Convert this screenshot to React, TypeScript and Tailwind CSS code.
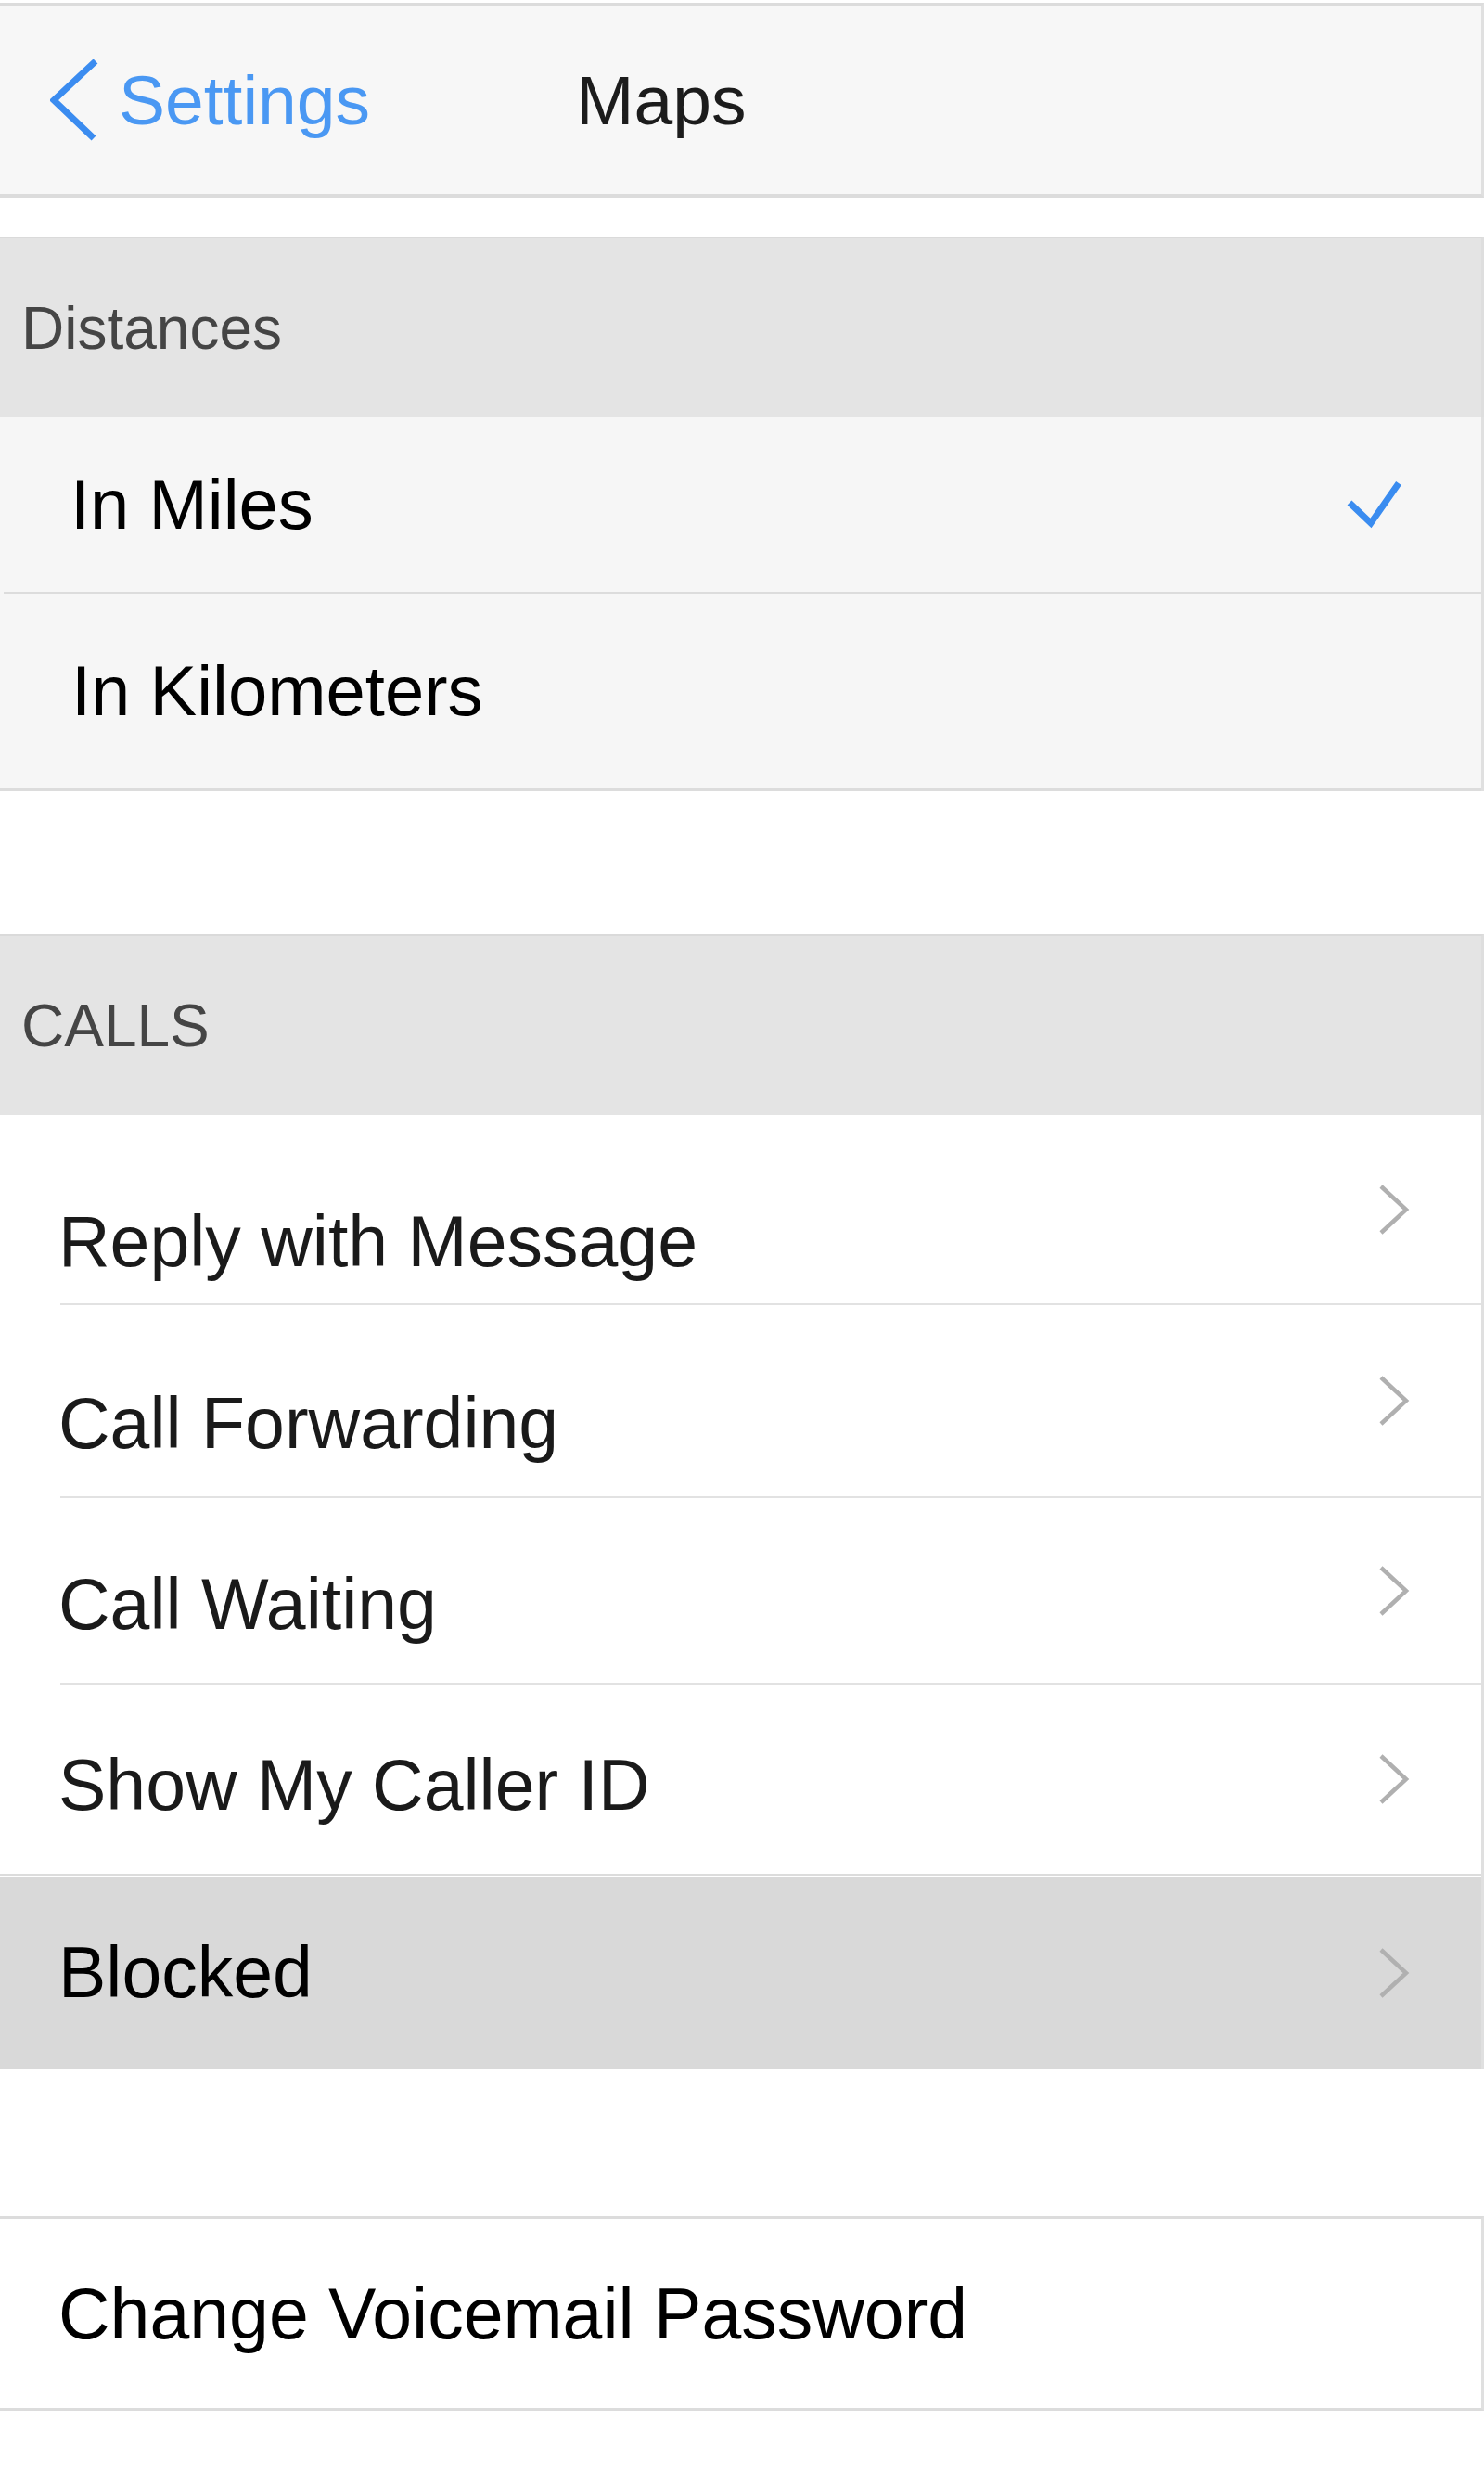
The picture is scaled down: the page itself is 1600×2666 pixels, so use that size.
import React from 'react';

const font = "font-['Liberation_Sans',Arial,Helvetica,sans-serif]";

type CallRow = {
  label: string;
  // pushes the label down inside the row; the reference isn't perfectly centred
  offset: string;
  rowClass: string;
};

const callRows: CallRow[] = [
  { label: 'Reply with Message', offset: 'pt-[70px]', rowClass: 'h-[203px]' },
  { label: 'Call Forwarding', offset: 'pt-[48px]', rowClass: 'h-[206px]' },
  { label: 'Call Waiting', offset: 'pt-[30px]', rowClass: 'h-[199px]' },
  { label: 'Show My Caller ID', offset: 'pt-[12px]', rowClass: 'h-[204px]' },
];

function BackChevron() {
  return (
    <svg width="52" height="88" viewBox="0 0 52 88" fill="none">
      <path d="M49 2 L4 44 L47 85" stroke="#3b8cf0" strokeWidth="7" />
    </svg>
  );
}

function Disclosure() {
  return (
    <svg width="34" height="56" viewBox="0 0 34 56" fill="none">
      <path d="M3 3 L30 28 L3 53" stroke="#b0b0b0" strokeWidth="4.5" />
    </svg>
  );
}

function Checkmark() {
  return (
    <svg width="60" height="54" viewBox="0 0 60 54" fill="none">
      <path d="M3 25 L26 47 L56 4" stroke="#3a8cf0" strokeWidth="7" />
    </svg>
  );
}

function SectionHeader({ title }: { title: string }) {
  return (
    <div className="h-[195px] flex items-center pl-[23px] bg-[#e4e4e4] border-t-2 border-[#dadada] border-r-[3px] border-r-[#dedede]">
      <span className="text-[64px] leading-none text-[#454545]">{title}</span>
    </div>
  );
}

export default function App() {
  return (
    <div className={`${font} w-[1600px] min-h-[2666px] bg-white text-black`}>
      {/* nav bar */}
      <div className="pt-[3px]">
        <div className="h-[210px] bg-[#f7f7f7] border-t-4 border-b-4 border-[#dcdcdc] border-r-[3px] border-r-[#e0e0e0] flex items-center">
          <div className="flex items-center pl-[54px]">
            <BackChevron />
            <span className="ml-[22px] text-[75px] leading-none text-[#4a98f3]">Settings</span>
          </div>
          <span className="ml-[222px] text-[75px] leading-none text-[#1c1c1c]">Maps</span>
        </div>
      </div>

      <div className="h-[42px]" />

      {/* distances */}
      <SectionHeader title="Distances" />
      <div className="bg-[#f6f6f6] border-r-[3px] border-[#e0e0e0]">
        <div className="h-[188px] flex items-center justify-between pl-[76px] pr-[85px]">
          <span className="text-[76px] leading-none">In Miles</span>
          <Checkmark />
        </div>
        <div className="ml-[4px] h-[2px] bg-[#dcdcdc]" />
        <div className="h-[213px] flex items-center pl-[77px] border-b-[3px] border-[#dcdcdc]">
          <span className="text-[76px] leading-none">In Kilometers</span>
        </div>
      </div>

      <div className="h-[154px]" />

      {/* calls */}
      <SectionHeader title="CALLS" />
      <div className="border-r-[3px] border-[#e0e0e0]">
        {callRows.map((row, i) => (
          <div key={row.label}>
            <div className={`${row.rowClass} flex items-center justify-between pl-[63px] pr-[77px]`}>
              <div className={`${row.offset} flex items-center`}>
                <span className="text-[77px] leading-none text-[#1a1a1a]">{row.label}</span>
              </div>
              <Disclosure />
            </div>
            {i < callRows.length - 1 ? (
              <div className="ml-[65px] h-[2px] bg-[#e2e2e2]" />
            ) : (
              <div className="h-[3px] bg-[#dcdcdc] border-b border-white" />
            )}
          </div>
        ))}
        <div className="h-[207px] bg-[#d9d9d9] flex items-center justify-between pl-[63px] pr-[77px]">
          <span className="text-[77px] leading-none">Blocked</span>
          <Disclosure />
        </div>
      </div>

      <div className="h-[159px]" />

      <div className="h-[210px] flex items-center pl-[63px] border-t-[3px] border-b-[3px] border-[#dcdcdc] border-r-[3px] border-r-[#e0e0e0]">
        <span className="text-[77px] leading-none">Change Voicemail Password</span>
      </div>
    </div>
  );
}
